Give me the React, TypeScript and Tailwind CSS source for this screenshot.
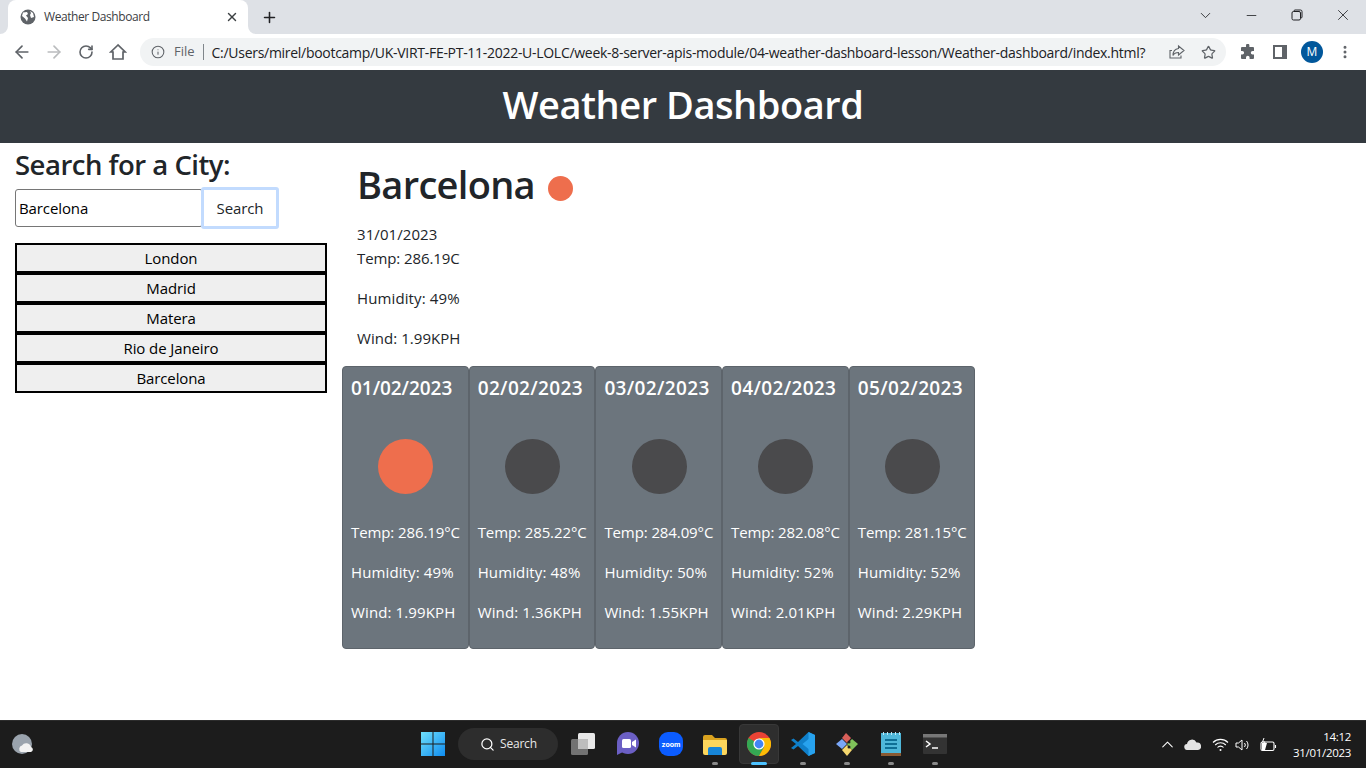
import React from "react";
import { ArrowLeft, ArrowRight, RotateCw, Info, Star, X, Plus, ChevronDown, Minus, Search, ChevronUp, EllipsisVertical } from "lucide-react";

const font = { fontFamily: '"Open Sans", "Noto Sans", sans-serif' };

const cards = [
  { d: "01/02/2023", t: "286.19", h: "49", w: "1.99", c: "bg-[#ee6e4d]", k: "tracking-[-0.05px]" },
  { d: "02/02/2023", t: "285.22", h: "48", w: "1.36", c: "bg-[#4a4a4c]", k: "tracking-[0.35px]" },
  { d: "03/02/2023", t: "284.09", h: "50", w: "1.55", c: "bg-[#4a4a4c]", k: "tracking-[0.35px]" },
  { d: "04/02/2023", t: "282.08", h: "52", w: "2.01", c: "bg-[#4a4a4c]", k: "tracking-[0.35px]" },
  { d: "05/02/2023", t: "281.15", h: "52", w: "2.29", c: "bg-[#4a4a4c]", k: "tracking-[0.35px]" },
];
const cities = ["London", "Madrid", "Matera", "Rio de Janeiro", "Barcelona"];

function Cell({ children, dot, active }: { children: React.ReactNode; dot?: boolean; active?: boolean }) {
  return (
    <div className="relative w-11 h-11 flex items-center justify-center">
      {active && <span className="absolute left-[2px] top-[2px] w-10 h-10 rounded bg-[#2e2e2e] border border-[#383838]" />}
      <span className="relative flex">{children}</span>
      {dot && <span className={`absolute bottom-[1px] h-[3px] rounded-full ${active ? "w-4 bg-[#4cc2ff]" : "w-[6px] bg-[#8a8a8a]"}`} />}
    </div>
  );
}

function TabStrip() {
  return (
    <div className="h-[34px] bg-[#dee1e6] flex items-end shrink-0 relative pl-2">
      <div className="relative w-[240px] h-[34px] bg-white rounded-t-lg flex items-center pl-3 pr-[9px]">
        <svg width="8" height="8" viewBox="0 0 8 8" className="absolute -left-2 bottom-0"><path d="M8 0V8H0A8 8 0 0 0 8 0Z" fill="#fff" /></svg>
        <svg width="8" height="8" viewBox="0 0 8 8" className="absolute -right-2 bottom-0"><path d="M0 0V8H8A8 8 0 0 1 0 0Z" fill="#fff" /></svg>
        <svg width="16" height="16" viewBox="0 0 16 16" className="shrink-0">
          <circle cx="8" cy="8" r="7.5" fill="#5f6368" />
          <path d="M3 3.5 7 3l1 2-2 1.5 2 2.5-1 3.5-2-3L2 7ZM10 2l3 2 1 4-3 1-1-3 1-2Z" fill="#fff" />
        </svg>
        <span className="ml-2 text-[12px] text-[#3c4043] tracking-[-0.42px] flex-1 whitespace-nowrap">Weather Dashboard</span>
        <X size={14} strokeWidth={2.4} className="text-[#3c4043]" />
      </div>
      <div className="ml-[13px] h-[34px] flex items-center"><Plus size={17} strokeWidth={2.2} className="text-[#202124]" /></div>
      <div className="flex-1" />
      <div className="h-[34px] flex items-center text-[#202124] pb-1">
        <div className="w-[46px] flex justify-center"><ChevronDown size={17} strokeWidth={1.2} /></div>
        <div className="w-[46px] flex justify-center"><Minus size={15} strokeWidth={1.3} /></div>
        <div className="w-[46px] flex justify-center">
          <svg width="12" height="12" viewBox="0 0 12 12" fill="none" stroke="#202124"><rect x="1" y="2.5" width="8.5" height="8.5" rx="1.5" /><path d="M3 2.5V2a1 1 0 0 1 1-1h5.5A1.5 1.5 0 0 1 11 2.5V8a1 1 0 0 1-1 1h-.5" /></svg>
        </div>
        <div className="w-[46px] flex justify-center"><X size={18} strokeWidth={1.1} /></div>
      </div>
    </div>
  );
}

function Toolbar() {
  return (
    <div className="h-9 bg-white flex items-center shrink-0 text-[#5f6368]">
      <div className="w-[38px] pl-[6px] flex justify-center"><ArrowLeft size={20} strokeWidth={2} /></div>
      <div className="w-8 flex justify-center"><ArrowRight size={20} strokeWidth={2} className="text-[#babcbe]" /></div>
      <div className="w-8 flex justify-center"><RotateCw size={16} strokeWidth={2.4} /></div>
      <div className="w-8 flex justify-center">
        <svg width="18" height="18" viewBox="0 0 18 18" fill="none" stroke="#5f6368" strokeWidth="1.7" strokeLinejoin="miter"><path d="M9 2 1.8 9H4v7h10V9h2.2Z" /></svg>
      </div>
      <div className="ml-[6px] w-[1086px] h-7 rounded-full bg-[#f1f3f4] flex items-center pl-[11px] text-[13px]">
        <Info size={14} strokeWidth={1.8} />
        <span className="ml-[9px] text-[13px]">File</span>
        <span className="ml-2 w-px h-4 bg-[#80868b]" />
        <span className="ml-2 text-[#202124] whitespace-nowrap text-[14px] tracking-[-0.288px]">C:/Users/mirel/bootcamp/UK-VIRT-FE-PT-11-2022-U-LOLC/week-8-server-apis-module/04-weather-dashboard-lesson/Weather-dashboard/index.html?</span>
        <div className="flex-1" />
        <svg width="16" height="16" viewBox="0 0 16 16" fill="none" stroke="#5f6368" strokeWidth="1.1" className="mr-4">
          <path d="M3 6.5H1V14h11v-2.5" /><path d="M9.5 2 15 6.5 9.5 11V8.5C7 8.5 5 9.5 4 11.5 4 8 6 5 9.5 4.5Z" />
        </svg>
        <Star size={15} strokeWidth={2} className="mr-[10px]" />
      </div>
      <div className="w-11 flex justify-center">
        <svg width="16" height="16" viewBox="0 0 16 16" fill="#5f6368"><path d="M6 1.5a1.7 1.7 0 0 1 3.4 0V3H13a1 1 0 0 1 1 1v3h-1.4a1.8 1.8 0 0 0 0 3.6H14V14a1 1 0 0 1-1 1H9.6v-1.4a1.8 1.8 0 0 0-3.6 0V15H2a1 1 0 0 1-1-1v-3.4h1.3a1.8 1.8 0 0 0 0-3.6H1V4a1 1 0 0 1 1-1h4Z" /></svg>
      </div>
      <div className="w-5 flex justify-center">
        <svg width="14" height="14" viewBox="0 0 14 14"><rect width="14" height="14" fill="#5f6368" /><rect x="2" y="2" width="7" height="10" fill="#fff" /></svg>
      </div>
      <div className="ml-[11px] w-[22px] h-[22px] rounded-full bg-[#01579b] text-white text-[12px] flex items-center justify-center">M</div>
      <div className="ml-[11px] w-[22px] flex justify-center"><EllipsisVertical size={16} strokeWidth={2.5} /></div>
    </div>
  );
}

function Sidebar() {
  return (
    <aside className="w-[342px] shrink-0 pl-[15px] pt-[5px]">
      <h2 className="text-[27.5px] leading-[34px] font-semibold text-[#212529] tracking-[-0.5px] whitespace-nowrap">Search for a City:</h2>
      <div className="flex items-center mt-[7px]">
        <div className="w-[188px] h-[38px] border border-[#767676] rounded-[3px] text-[15px] text-black flex items-center pl-[3px] tracking-[-0.1px]">Barcelona</div>
        <div className="w-[74px] h-[38px] rounded-[1px] outline-[3px] outline-[#c2dbfe] outline -outline-offset-[1px] flex items-center justify-center text-[15px] text-[#212529] tracking-[-0.1px]">Search</div>
      </div>
      <div className="mt-[16px] w-[312px] flex flex-col">
        {cities.map((c) => (
          <div key={c} className="h-[30px] border-2 border-black bg-[#efefef] flex items-center justify-center text-[15px] text-black tracking-[-0.1px]">{c}</div>
        ))}
      </div>
    </aside>
  );
}

function Current() {
  return (
    <div className="pl-[15px] text-[15px] text-[#212529]">
      <div className="flex items-center h-[48px] mt-[17px]">
        <h1 className="text-[38px] leading-[48px] font-semibold tracking-[-0.7px]">Barcelona</h1>
        <span className="ml-[13px] mt-[8px] w-[25px] h-[25px] rounded-full bg-[#ee6e4d]" />
      </div>
      <div className="mt-[14px] leading-6 h-6 tracking-[0.08px]">31/01/2023</div>
      <div className="leading-6 h-6 tracking-[-0.1px]">Temp: 286.19C</div>
      <div className="mt-4 leading-6 h-6 tracking-[0.12px]">Humidity: 49%</div>
      <div className="mt-4 leading-6 h-6 tracking-[0.05px]">Wind: 1.99KPH</div>
    </div>
  );
}

function Card({ d, t, h, w, c, k }: (typeof cards)[number]) {
  return (
    <div className="w-[126.7px] h-[283px] bg-[#6c757d] border border-[#5d646b] rounded text-white pl-2 pt-[8px] shrink-0 text-[15px]">
      <div className={`text-[19px] leading-[26px] font-semibold whitespace-nowrap ${k}`}>{d}</div>
      <div className="h-[112px] mt-[9px] flex items-center justify-center pr-[7px]">
        <span className={`w-[55px] h-[55px] rounded-full blur-[0.6px] ${c}`} />
      </div>
      <div className="mt-[-2px] leading-6 whitespace-nowrap tracking-[-0.1px]">Temp: {t}°C</div>
      <div className="mt-4 leading-6 whitespace-nowrap tracking-[0.12px]">Humidity: {h}%</div>
      <div className="mt-4 leading-6 whitespace-nowrap tracking-[0.12px]">Wind: {w}KPH</div>
    </div>
  );
}

function Taskbar() {
  return (
    <div className="h-12 shrink-0 bg-[#1c1c1c] border-t border-[#2c2c2c] flex items-center relative">
      <div className="absolute left-[11px] top-[12px]">
        <svg width="24" height="24" viewBox="0 0 24 24"><circle cx="11" cy="11" r="10" fill="#9aa3ad" /><path d="M10 19a3.5 3.5 0 0 1 1-6.5 5 5 0 0 1 9 1.5 2.6 2.6 0 0 1 0 5Z" fill="#f2f2f2" /></svg>
      </div>
      <div className="absolute left-[411px] top-[1px] flex items-center">
        <Cell>
          <svg width="24" height="24" viewBox="0 0 24 24">
            <defs><linearGradient id="wg" x1="0" y1="0" x2="1" y2="1"><stop offset="0" stopColor="#6fe0fb" /><stop offset="1" stopColor="#0f8cf0" /></linearGradient></defs>
            <path d="M0 0h11.5v11.5H0ZM12.5 0H24v11.5H12.5ZM0 12.5h11.5V24H0ZM12.5 12.5H24V24H12.5Z" fill="url(#wg)" />
          </svg>
        </Cell>
        <div className="ml-[3px] w-[100px] h-8 rounded-full bg-[#2d2d2d] flex items-center pl-[22px] text-[12px] text-[#e8e8e8]">
          <Search size={15} strokeWidth={2} className="text-white" />
          <span className="ml-[5px] tracking-[-0.2px]">Search</span>
        </div>
        <div className="ml-[3px]" />
        <Cell>
          <svg width="24" height="24" viewBox="0 0 24 24"><rect x="7" y="1" width="17" height="16" rx="1.5" fill="#e9e9e9" /><rect x="0" y="7" width="17" height="16" rx="1.5" fill="#7c7c7c" fillOpacity=".9" /><rect x="7" y="7" width="10" height="10" fill="#bdbdbd" /></svg>
        </Cell>
        <Cell>
          <svg width="24" height="24" viewBox="0 0 24 24"><circle cx="13" cy="11" r="11" fill="#6b5fc4" /><path d="M2 11v12l6-3Z" fill="#6b5fc4" /><rect x="7" y="7" width="9" height="9" rx="1.5" fill="#fff" /><path d="M17 10l4-2.5v8L17 13Z" fill="#fff" /></svg>
        </Cell>
        <Cell>
          <svg width="24" height="24" viewBox="0 0 24 24"><rect width="24" height="24" rx="9" fill="#0b5cff" /><text x="12" y="14.5" textAnchor="middle" fontSize="7" fontWeight="700" fill="#fff" fontFamily="Inter, sans-serif">zoom</text></svg>
        </Cell>
        <Cell dot>
          <svg width="24" height="24" viewBox="0 0 24 24"><path d="M0 5a2 2 0 0 1 2-2h7l3 3h10a2 2 0 0 1 2 2v3H0Z" fill="#d9a21f" /><path d="M0 8h24v13a2 2 0 0 1-2 2H2a2 2 0 0 1-2-2Z" fill="#fcd65c" /><path d="M5 17a2 2 0 0 1 2-2h10a2 2 0 0 1 2 2v6H5Z" fill="#1786d8" /></svg>
        </Cell>
        <Cell dot active>
          <svg width="24" height="24" viewBox="0 0 24 24">
            <circle cx="12" cy="12" r="12" fill="#ea4335" />
            <path d="M12 12 1.6 6A12 12 0 0 0 12 24l5.2-9Z" fill="#34a853" />
            <path d="M12 6h10.4A12 12 0 0 1 12 24l5.2-9Z" fill="#fbbc05" />
            <circle cx="12" cy="12" r="5.6" fill="#fff" /><circle cx="12" cy="12" r="4.4" fill="#4285f4" />
          </svg>
        </Cell>
        <Cell dot>
          <svg width="24" height="24" viewBox="0 0 24 24"><path d="M17.5 0 24 3v18l-6.5 3L7 14l-4.5 3.5L0 16l5-4-5-4 2.5-1.5L7 10Z" fill="#0f7fc9" /><path d="M17.5 0 24 3v18l-6.5 3V17l-6-5 6-5Z" fill="#27a2ee" /></svg>
        </Cell>
        <Cell dot>
          <svg width="24" height="24" viewBox="0 0 24 24"><path d="M7 7 12 12 7 17 1 12Z" fill="#7aa7f7" /><path d="M17 7l6 5-6 6-5-6Z" fill="#7fc35a" /><path d="M12 13l5 5-5 6-5-6Z" fill="#f5d76e" /><path d="M7 6l4-5 5 5-4 5Z" fill="#d9605a" /><circle cx="14" cy="10" r="1.5" fill="#222" /><circle cx="14" cy="15" r="1.5" fill="#222" /></svg>
        </Cell>
        <Cell dot>
          <svg width="24" height="24" viewBox="0 0 24 24"><rect x="2" y="1" width="20" height="23" fill="#4fb7d9" /><rect x="2" y="21" width="20" height="3" fill="#8a5a33" /><path d="M6 7h12v2H6ZM6 11h12v2H6ZM6 15h12v2H6Z" fill="#0e6f96" /><path d="M4 0h1v3H4ZM8 0h1v3H8ZM12 0h1v3h-1ZM16 0h1v3h-1ZM20 0h1v3h-1Z" fill="#bfe6f2" /></svg>
        </Cell>
        <Cell dot>
          <svg width="24" height="24" viewBox="0 0 24 24"><rect y="2" width="24" height="20" rx="1" fill="#333" /><rect y="2" width="24" height="3.5" fill="#777" /><path d="m3 9 4 3-4 3" fill="none" stroke="#fff" strokeWidth="1.5" /><path d="M9 16h6" stroke="#fff" strokeWidth="1.5" /></svg>
        </Cell>
      </div>
      <div className="flex-1" />
      <div className="flex items-center text-white h-full">
        <ChevronUp size={19} strokeWidth={1.3} className="mr-[7px]" />
        <svg width="17" height="11" viewBox="0 0 17 11" className="mr-[11px]"><path d="M3.5 11a3 3 0 0 1-.5-6 5 5 0 0 1 9.5-1.5A3.8 3.8 0 0 1 14 11Z" fill="#e4e4e4" /></svg>
        <svg width="17" height="14" viewBox="0 0 17 14" fill="none" stroke="#fff" strokeWidth="1.1" className="mr-[6.5px]"><path d="M1 4.5a10.5 10.5 0 0 1 15 0M3.2 7a7.3 7.3 0 0 1 10.6 0M5.5 9.5a4 4 0 0 1 6 0" /><circle cx="8.5" cy="12" r="1" fill="#fff" stroke="none" /></svg>
        <svg width="16" height="14" viewBox="0 0 16 14" fill="none" stroke="#fff" strokeWidth="1" className="mr-[8.5px]"><path d="M1 5v4h2.5L7 12V2L3.5 5ZM9.5 5a3 3 0 0 1 0 4M11.5 3a6 6 0 0 1 0 8" /></svg>
        <svg width="17" height="14" viewBox="0 0 17 14" fill="none" stroke="#fff" strokeWidth="1.1" className="mr-[15.5px]"><rect x="1" y="4" width="13" height="8.5" rx="1.5" /><path d="M15.5 7v3" /><path d="M2 5h5l-2 7H2Z" fill="#fff" stroke="none" /><path d="M4 0 2.5 4H5L4 7" strokeWidth="1" /></svg>
        <div className="w-[59px] mr-[15px] flex flex-col items-end text-[11.5px] leading-4 text-white tracking-[-0.3px] whitespace-nowrap">
          <span>14:12</span>
          <span>31/01/2023</span>
        </div>
      </div>
    </div>
  );
}

export default function App() {
  return (
    <div className="w-[1366px] h-[768px] flex flex-col overflow-hidden bg-white" style={font}>
      <TabStrip />
      <Toolbar />
      <header className="h-[73px] bg-[#343a40] shrink-0 flex items-center justify-center pb-[5px]">
        <h1 className="text-[38px] font-semibold text-white tracking-[-0.45px] leading-none whitespace-nowrap">Weather Dashboard</h1>
      </header>
      <main className="flex-1 flex min-h-0">
        <Sidebar />
        <div className="flex-1 min-w-0">
          <Current />
          <div className="flex mt-[16px]">
            {cards.map((c) => <Card key={c.d} {...c} />)}
          </div>
        </div>
      </main>
      <Taskbar />
    </div>
  );
}
